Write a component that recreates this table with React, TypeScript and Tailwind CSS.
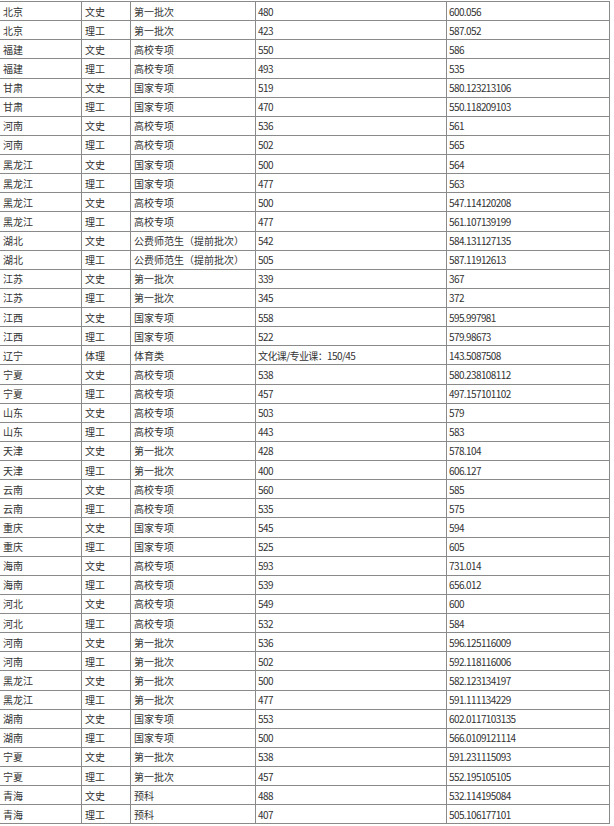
const rows: [string, string, string, string, string][] = [
  ['北京', '文史', '第一批次', '480', '600.056'],
  ['北京', '理工', '第一批次', '423', '587.052'],
  ['福建', '文史', '高校专项', '550', '586'],
  ['福建', '理工', '高校专项', '493', '535'],
  ['甘肃', '文史', '国家专项', '519', '580.123213106'],
  ['甘肃', '理工', '国家专项', '470', '550.118209103'],
  ['河南', '文史', '高校专项', '536', '561'],
  ['河南', '理工', '高校专项', '502', '565'],
  ['黑龙江', '文史', '国家专项', '500', '564'],
  ['黑龙江', '理工', '国家专项', '477', '563'],
  ['黑龙江', '文史', '高校专项', '500', '547.114120208'],
  ['黑龙江', '理工', '高校专项', '477', '561.107139199'],
  ['湖北', '文史', '公费师范生（提前批次）', '542', '584.131127135'],
  ['湖北', '理工', '公费师范生（提前批次）', '505', '587.11912613'],
  ['江苏', '文史', '第一批次', '339', '367'],
  ['江苏', '理工', '第一批次', '345', '372'],
  ['江西', '文史', '国家专项', '558', '595.997981'],
  ['江西', '理工', '国家专项', '522', '579.98673'],
  ['辽宁', '体理', '体育类', '文化课/专业课：150/45', '143.5087508'],
  ['宁夏', '文史', '高校专项', '538', '580.238108112'],
  ['宁夏', '理工', '高校专项', '457', '497.157101102'],
  ['山东', '文史', '高校专项', '503', '579'],
  ['山东', '理工', '高校专项', '443', '583'],
  ['天津', '文史', '第一批次', '428', '578.104'],
  ['天津', '理工', '第一批次', '400', '606.127'],
  ['云南', '文史', '高校专项', '560', '585'],
  ['云南', '理工', '高校专项', '535', '575'],
  ['重庆', '文史', '国家专项', '545', '594'],
  ['重庆', '理工', '国家专项', '525', '605'],
  ['海南', '文史', '高校专项', '593', '731.014'],
  ['海南', '理工', '高校专项', '539', '656.012'],
  ['河北', '文史', '高校专项', '549', '600'],
  ['河北', '理工', '高校专项', '532', '584'],
  ['河南', '文史', '第一批次', '536', '596.125116009'],
  ['河南', '理工', '第一批次', '502', '592.118116006'],
  ['黑龙江', '文史', '第一批次', '500', '582.123134197'],
  ['黑龙江', '理工', '第一批次', '477', '591.111134229'],
  ['湖南', '文史', '国家专项', '553', '602.0117103135'],
  ['湖南', '理工', '国家专项', '500', '566.0109121114'],
  ['宁夏', '文史', '第一批次', '538', '591.231115093'],
  ['宁夏', '理工', '第一批次', '457', '552.195105105'],
  ['青海', '文史', '预科', '488', '532.114195084'],
  ['青海', '理工', '预科', '407', '505.106177101'],
];

// numbers in the source are narrow half-width glyphs
const num = 'tracking-[-0.6px]';

export default function App() {
  return (
    <div className="bg-white w-[614px] h-[826px] overflow-hidden pt-px text-[#333] text-[10px] font-['Noto_Sans_CJK_SC','Noto_Sans',sans-serif]">
      <div className="w-[610px] border-t border-[#8a8a8a]">
        {rows.map((r, i) => (
          <div
            key={i}
            className="grid grid-cols-[82px_49px_125px_191px_163px] h-[19.14px] border-b border-[#8a8a8a]"
          >
            <div className="border-r border-[#8a8a8a] pl-[3px] flex items-center">{r[0]}</div>
            <div className="border-r border-[#8a8a8a] pl-[3px] flex items-center">{r[1]}</div>
            <div className="border-r border-[#8a8a8a] pl-[3px] flex items-center whitespace-nowrap">{r[2]}</div>
            <div className={`border-r border-[#8a8a8a] pl-[2px] flex items-center whitespace-nowrap ${num}`}>{r[3]}</div>
            <div className={`border-r border-[#8a8a8a] pl-[2px] flex items-center ${num}`}>{r[4]}</div>
          </div>
        ))}
      </div>
    </div>
  );
}
